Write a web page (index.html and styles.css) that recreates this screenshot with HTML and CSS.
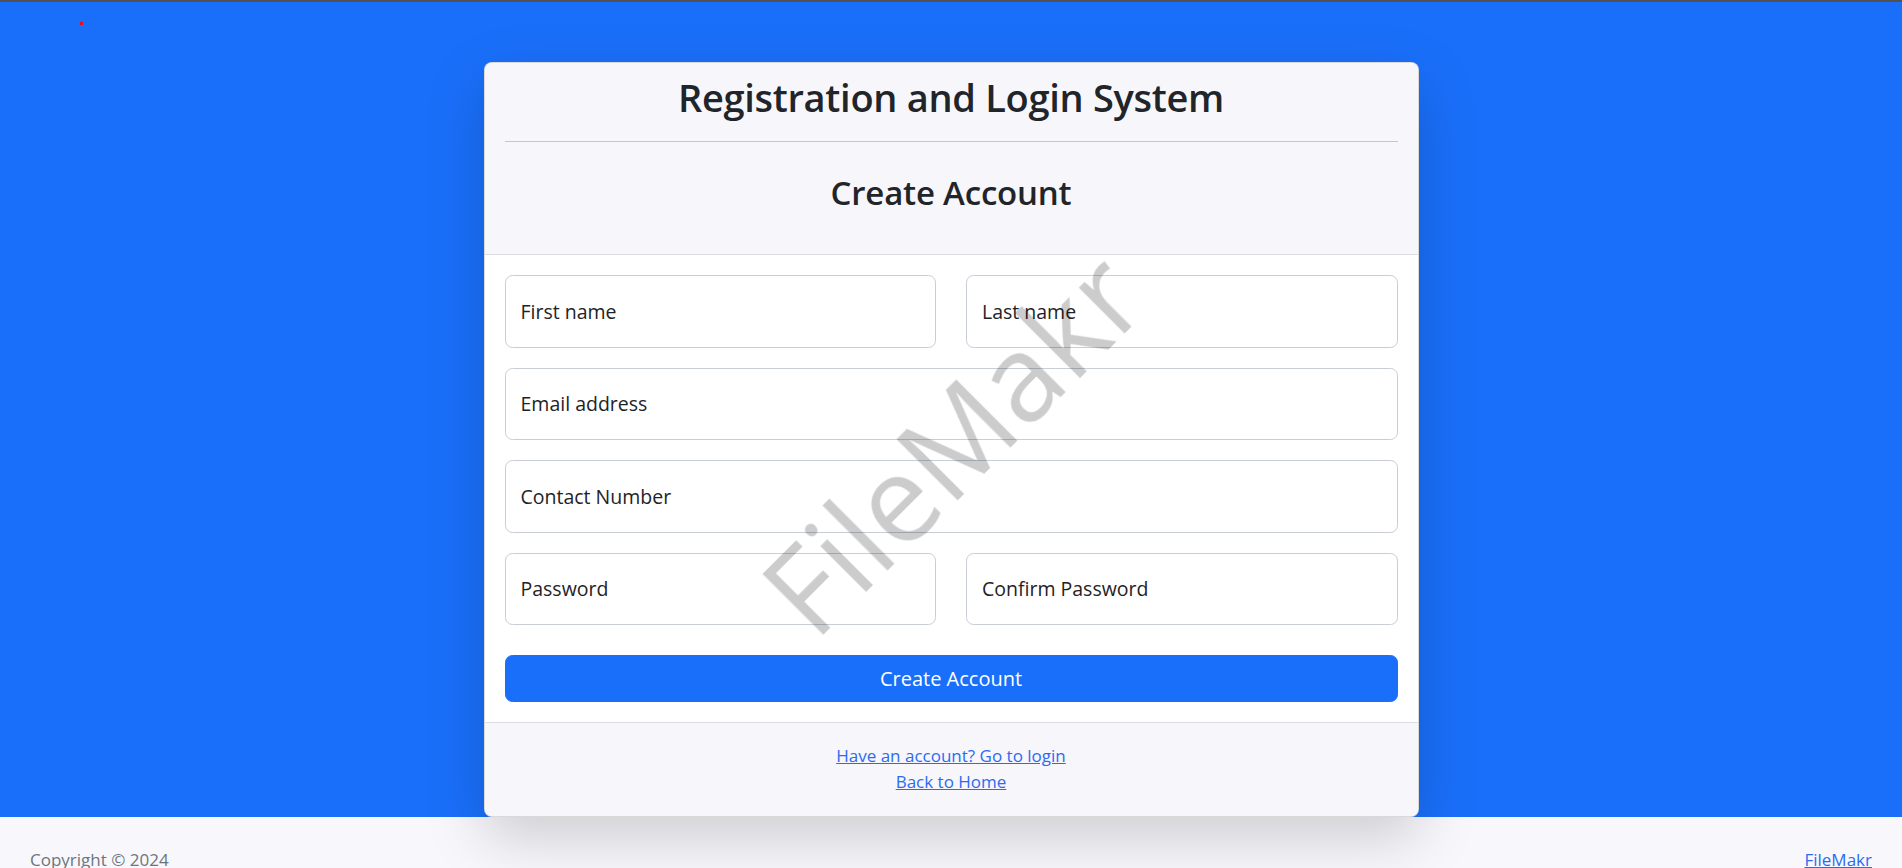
FILE: index.html
```html
<!DOCTYPE html>
<html lang="en">

<head>
    <meta charset="UTF-8">
    <meta name="viewport" content="width=device-width, initial-scale=1.0">
    <title>Register</title>
    <link rel="stylesheet" href="styles.css">
</head>
<body>
    <div class="topline"></div>
    <span class="dot"></span>
    <div class="layout">
        <main class="layout-content">
            <div class="card">
                <div class="card-header">
                    <h1 class="site-title">Registration and Login System</h1>
                    <hr>
                    <h3 class="card-title">Create Account</h3>
                </div>
                <div class="card-body">
                    <form class="reg-form">
                        <input class="field" type="text" placeholder="First name">
                        <input class="field" type="text" placeholder="Last name">
                        <input class="field full" type="email" placeholder="Email address">
                        <input class="field full" type="text" placeholder="Contact Number">
                        <input class="field" type="password" placeholder="Password">
                        <input class="field" type="password" placeholder="Confirm Password">
                        <button class="btn-primary full" type="button">Create Account</button>
                    </form>
                </div>
                <div class="card-footer">
                    <div class="small"><a href="#">Have an account? Go to login</a></div>
                    <div class="small"><a href="#">Back to Home</a></div>
                </div>
            </div>
        </main>
        <footer class="site-footer">
            <div class="muted">Copyright &copy; 2024</div>
            <div><a href="#">FileMakr</a></div>
        </footer>
    </div>
    <div class="watermark">FileMakr</div>
</body>

</html>
```

FILE: styles.css
```css
body {
    font-family: "Open Sans", "Noto Sans", sans-serif;
    font-size: 20px;
    line-height: 1.5;
    color: #212529;
    background-color: #1a6ffa;
    margin: 0;
    padding: 0;
}

a {
    color: #2b6bf3;
}

.topline {
    height: 2px;
    background-color: #55504f;
}

.dot {
    position: absolute;
    left: 80px;
    top: 22px;
    width: 3px;
    height: 3px;
    background-color: #e0101c;
}

.layout-content {
    position: relative;
    z-index: 1;
}

.card {
    width: 933px;
    margin: 60px auto 0;
    background-color: #fff;
    border: 1px solid rgba(0, 0, 0, 0.15);
    border-radius: 8px;
    box-shadow: 0 20px 60px rgba(0, 0, 0, 0.175);
    overflow: hidden;
}

.card-header {
    background-color: #f7f6fa;
    padding: 10px 20px;
    border-bottom: 1px solid #dcdbe0;
    text-align: center;
}

.site-title {
    font-size: 38px;
    font-weight: 600;
    letter-spacing: -0.3px;
    line-height: 48px;
    margin: 0;
}

hr {
    border: 0;
    border-top: 1px solid #c6c5ca;
    margin: 20px 0;
}

.card-title {
    font-size: 33px;
    font-weight: 600;
    letter-spacing: -0.2px;
    line-height: 42px;
    margin: 30px 0;
}

.card-body {
    padding: 20px;
}

.reg-form {
    display: grid;
    grid-template-columns: 1fr 1fr;
    gap: 20px 30px;
}

.full {
    grid-column: 1 / -1;
}

.field {
    height: 72.5px;
    box-sizing: border-box;
    padding: 0 15px;
    border: 1px solid #c8cdd7;
    border-radius: 7.5px;
    font-family: inherit;
    font-size: 19.5px;
    color: #212529;
    background-color: #fff;
}

.field::placeholder {
    color: #1f2326;
    opacity: 1;
}

.btn-primary {
    margin-top: 10px;
    height: 47px;
    border: 1px solid #1a6ffa;
    border-radius: 7.5px;
    background-color: #1a6ffa;
    color: #fff;
    font-family: inherit;
    font-size: 20px;
}

.card-footer {
    background-color: #f7f6fa;
    border-top: 1px solid #dcdbe0;
    padding: 20px;
    text-align: center;
}

.small {
    font-size: 17px;
    line-height: 26.25px;
}

.site-footer {
    display: flex;
    justify-content: space-between;
    background-color: #f8f8fc;
    padding: 30px;
    font-size: 17px;
    line-height: 26.25px;
}

.muted {
    color: #6c757d;
}

.watermark {
    position: fixed;
    z-index: 2;
    left: 50%;
    top: calc(50% + 8px);
    transform: translate(-50%, -50%) rotate(-45deg);
    font-size: 120px;
    line-height: 1;
    color: rgba(0, 0, 0, 0.2);
    pointer-events: none;
    white-space: nowrap;
}
```
